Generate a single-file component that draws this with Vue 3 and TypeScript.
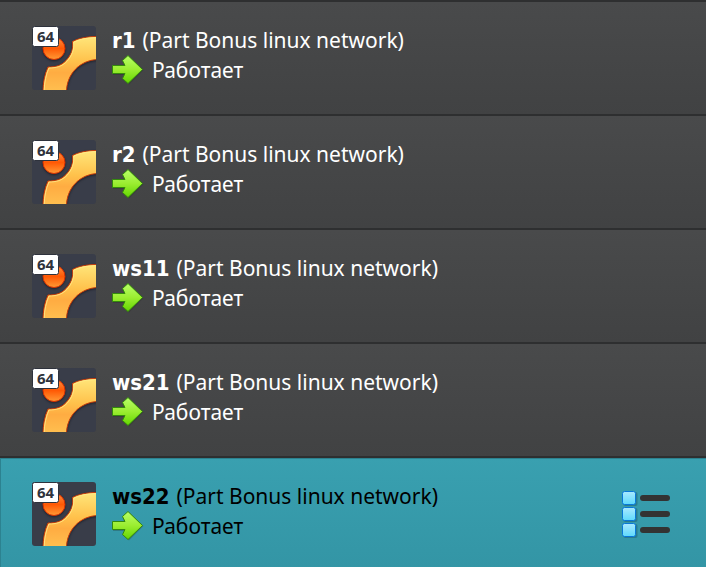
<script setup lang="ts">
import { ref } from 'vue'

interface Machine {
  name: string
  snapshot: string
  state: string
}

const snapshot = 'Part Bonus linux network'
const state = 'Работает'
const machines: Machine[] = ['r1', 'r2', 'ws11', 'ws21', 'ws22'].map((name) => ({ name, snapshot, state }))
const selected = ref('ws22')
</script>

<template>
  <ul class="machines">
    <li v-for="m in machines" :key="m.name" class="machine" :class="{ selected: m.name === selected }">
      <button class="entry" type="button" @click="selected = m.name">
        <svg class="os" viewBox="0 0 64 64" aria-hidden="true">
          <defs>
            <linearGradient :id="`ring-${m.name}`" x1="0" y1="0" x2="0" y2="1">
              <stop offset="0" stop-color="#ffe67a" />
              <stop offset="0.45" stop-color="#ffc14b" />
              <stop offset="0.65" stop-color="#ffac42" />
              <stop offset="1" stop-color="#ffc050" />
            </linearGradient>
            <linearGradient :id="`ball-${m.name}`" x1="0" y1="0" x2="0" y2="1">
              <stop offset="0" stop-color="#ff9140" />
              <stop offset="0.5" stop-color="#ff5905" />
              <stop offset="1" stop-color="#ff9a35" />
            </linearGradient>
            <clipPath :id="`tile-${m.name}`"><rect width="64" height="64" rx="3" /></clipPath>
            <filter :id="`shade-${m.name}`" x="-20%" y="-20%" width="140%" height="140%" color-interpolation-filters="sRGB">
              <feDropShadow dx="0" dy="1" stdDeviation="1.3" flood-color="#14161e" flood-opacity="0.7" />
            </filter>
          </defs>
          <g :clip-path="`url(#tile-${m.name})`">
            <rect width="64" height="64" fill="#393d49" />
            <g :filter="`url(#shade-${m.name})`">
              <circle cx="22" cy="22.5" r="11" :fill="`url(#ball-${m.name})`" stroke="#d83000" stroke-width="1" />
              <path
                d="M40.500 15.500C47 12 55 10.500 66 10.500V33.500C48 34 34.500 48 34.500 66H11C11 57 12.500 48.500 16 41C23 41 29 40 34 34.500C39.500 28.500 41.500 22.500 40.500 15.500Z"
                :fill="`url(#ring-${m.name})`"
                stroke="#c93a08"
                stroke-width="1"
              />
              <path d="M41.500 16.500C48 13.100 55 11.600 66 11.600M12.200 64C12.400 56 14 49 17 42C24 41.900 30 40.700 35 35.300C40 29.800 42.300 23.500 41.600 16.500" fill="none" stroke="#ffec8c" stroke-width="0.800" />
            </g>
          </g>
          <rect x="0.500" y="0.500" width="26" height="20" rx="2" fill="#fff" stroke="#2e323c" />
          <text class="bits" x="5" y="16">64</text>
        </svg>
        <span class="info">
          <span class="line"><b>{{ m.name }}&nbsp;</b>({{ m.snapshot }})</span>
          <span class="line status">
            <svg class="arrow" viewBox="0 0 32 30" aria-hidden="true">
              <defs>
                <linearGradient :id="`go-${m.name}`" x1="0" y1="0" x2="0" y2="1">
                  <stop offset="0" stop-color="#b8ff68" />
                  <stop offset="0.5" stop-color="#9bed31" />
                  <stop offset="1" stop-color="#63d600" />
                </linearGradient>
              </defs>
              <path d="M1 11H12L10.500 6L17 1L31.500 15L17 29.500L10.500 24L12 20H1Z" fill="#202020" opacity="0.25" />
              <path d="M.5 10.500H13L10.500 5.500L16 .5L30.500 14.500L16 28.500L10.500 23.500L13 18.500H.5Z" :fill="`url(#go-${m.name})`" stroke="#348a0c" />
            </svg>
            {{ m.state }}
          </span>
        </span>
      </button>
      <button v-if="m.name === selected" class="tools" type="button" aria-label="Меню">
        <svg viewBox="0 0 50 48" aria-hidden="true">
          <defs>
            <linearGradient id="box" x1="0" y1="0" x2="0" y2="1">
              <stop offset="0" stop-color="#a9e9ff" />
              <stop offset="1" stop-color="#5dd9fc" />
            </linearGradient>
          </defs>
          <g v-for="n in 3" :key="n" :transform="`translate(0 ${(n - 1) * 16})`">
            <rect x="1.500" y="2" width="14" height="14" rx="2" fill="#174e6c" opacity="0.4" />
            <rect x="0.500" y="1.500" width="13" height="13" rx="2" fill="url(#box)" stroke="#0878d8" />
            <rect x="18" y="5" width="30" height="6" rx="3" fill="#333" />
          </g>
        </svg>
      </button>
    </li>
  </ul>
</template>

<style>
body {
  margin: 0;
  background: #434445;
}
</style>

<style scoped>
.machines {
  display: flex;
  flex-direction: column;
  height: 100vh;
  margin: 0;
  padding: 0;
  overflow: hidden;
  list-style: none;
  font-family: "Noto Sans", sans-serif;
  font-size: 21px;
}

.machine {
  display: flex;
  flex: none;
  align-items: flex-start;
  box-sizing: border-box;
  height: 114px;
  padding: 24px 34px 24px 32px;
  border-top: 2px solid #2e2f30;
  background: linear-gradient(#494a4b, #414243);
  color: #fff;
}

.machine.selected {
  background: linear-gradient(#39a0b0, #3395a5);
  box-shadow: inset 1px 1px #2c8290;
  color: #000;
}

button {
  padding: 0;
  border: 0;
  background: none;
  color: inherit;
  font: inherit;
  text-align: left;
}

.entry {
  display: flex;
  flex: 1;
  gap: 16px;
}

.os {
  flex: none;
  width: 64px;
  height: 64px;
}

.bits {
  fill: #2f333d;
  font: bold 15px "Noto Sans", sans-serif;
}

.info {
  display: flex;
  flex-direction: column;
  gap: 2px;
}

.line {
  height: 28px;
  line-height: 28px;
  white-space: nowrap;
}

.line b {
  font-family: "DejaVu Sans Condensed", "DejaVu Sans", sans-serif;
  font-size: 22px;
  line-height: 1;
}

.status {
  display: flex;
  align-items: center;
  gap: 8px;
}

.arrow {
  width: 32px;
  height: 30px;
}

.tools {
  margin-top: 8px;
}

.tools svg {
  display: block;
  width: 50px;
  height: 48px;
}
</style>
